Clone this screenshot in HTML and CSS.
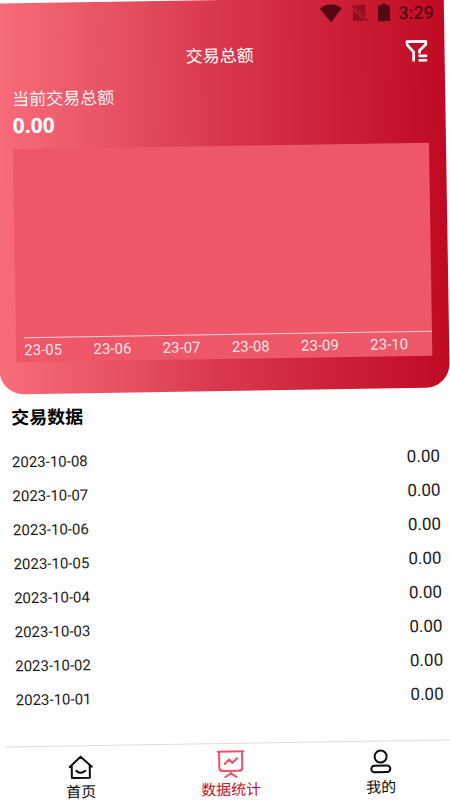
FILE: index.html
```
<!DOCTYPE html>
<html lang="zh-CN">
<head>
<meta charset="utf-8">
<meta name="viewport" content="width=device-width, initial-scale=1">
<title>交易总额</title>
<link rel="stylesheet" href="styles.css">
</head>
<body>
<div class="app">
  <header class="card">
    <div class="status">
      <svg class="status-wifi" viewBox="0 0 22 18"><path d="M0 4.200Q11-4.200 22 4.200L11 18Z"/></svg>
      <svg class="status-sim" viewBox="0 0 18 18"><path d="M6 1H14.500V12.800L3.300 2.500ZM2 5.500 13.800 17H2Z"/><path class="slash" d="M1 1.500 16.500 17"/></svg>
      <svg class="status-battery" viewBox="0 0 12 18"><path d="M3.500 0h5v1.800H12V18H0V1.800h3.500Z"/></svg>
      <span>3:29</span>
    </div>
    <div class="titlebar">
      <h1>交易总额</h1>
      <button class="filter" type="button" aria-label="筛选">
        <svg viewBox="0 0 22 22"><path d="M8 20.500V12L1.500 4.500V1.500H20.500V4.500L14 10.500V12.500M14 16H20.500M14 20.500H20.500"/></svg>
      </button>
    </div>
    <div class="summary">
      <p class="summary-label">当前交易总额</p>
      <p class="summary-amount">0.00</p>
      <div class="chart">
        <div class="plot"></div>
        <ul class="months">
          <li>23-05</li><li>23-06</li><li>23-07</li><li>23-08</li><li>23-09</li><li>23-10</li>
        </ul>
      </div>
    </div>
  </header>
  <main class="records">
    <h2>交易数据</h2>
    <table>
      <tbody>
        <tr><th scope="row">2023-10-08</th><td>0.00</td></tr>
        <tr><th scope="row">2023-10-07</th><td>0.00</td></tr>
        <tr><th scope="row">2023-10-06</th><td>0.00</td></tr>
        <tr><th scope="row">2023-10-05</th><td>0.00</td></tr>
        <tr><th scope="row">2023-10-04</th><td>0.00</td></tr>
        <tr><th scope="row">2023-10-03</th><td>0.00</td></tr>
        <tr><th scope="row">2023-10-02</th><td>0.00</td></tr>
        <tr><th scope="row">2023-10-01</th><td>0.00</td></tr>
      </tbody>
    </table>
  </main>
  <nav class="tabs">
    <a href="#home">
      <svg viewBox="0 0 28 28"><path d="M3 14.500 14 4.500 25 14.500M5 13V25.500H23V13M9.500 18.500Q14 22.500 18.500 18.500"/></svg>
      首页
    </a>
    <a class="active" href="#stats" aria-current="page">
      <svg viewBox="0 0 28 28"><path d="M1 1.500H27M2.500 2V17.500Q2.500 21 6 21H22Q25.500 21 25.500 17.500V2M14 21V24M8.500 27 14 23.500 19.500 27M8 14 12.500 9.500 15.500 13 20.500 8.500"/></svg>
      数据统计
    </a>
    <a href="#me">
      <svg viewBox="0 0 28 28"><circle cx="14" cy="9" r="6"/><rect x="4.500" y="18" width="19" height="6.500" rx="3.250"/></svg>
      我的
    </a>
  </nav>
</div>
</body>
</html>
```

FILE: styles.css
```
* {
  box-sizing: border-box;
}

body {
  margin: 0;
  overflow: hidden;
  background: #fefefe;
  color: #1c1c1c;
  font-family: Roboto, "Noto Sans CJK SC", sans-serif;
}

h1, h2, p, ul {
  margin: 0;
  padding: 0;
}

.app {
  display: flex;
  flex-direction: column;
  min-height: 100vh;
  transform: rotate(-0.9deg);
}

.card {
  padding-bottom: 32px;
  border-radius: 0 0 24px 24px;
  background: linear-gradient(90deg, #f86c7b 0%, #e65062 28%, #d9374b 50%, #c00a22 100%);
  color: #fff;
}

.status {
  display: flex;
  align-items: center;
  justify-content: flex-end;
  gap: 9px;
  height: 30px;
  padding-right: 10px;
  color: #560812;
  font-size: 18px;
  font-weight: 500;
}

.status svg {
  height: 18px;
  fill: currentColor;
}

.status-wifi {
  width: 22px;
}

.status-sim {
  width: 18px;
  opacity: 0.5;
}

.status-battery {
  width: 12px;
}

.slash {
  stroke: currentColor;
  stroke-width: 1.5;
}

.titlebar {
  display: grid;
  grid-template-columns: 1fr auto 1fr;
  align-items: center;
  height: 48px;
  padding: 0 17px;
}

.titlebar h1 {
  grid-column: 2;
  font-size: 17px;
  font-weight: 400;
}

.filter {
  justify-self: end;
  width: 22px;
  height: 22px;
  padding: 0;
  border: 0;
  background: none;
  color: inherit;
}

.filter svg {
  display: block;
  fill: none;
  stroke: currentColor;
  stroke-width: 2.75;
  stroke-linejoin: round;
  stroke-linecap: round;
}

.summary {
  padding: 6px 17px 0;
}

.summary-label {
  font-size: 17px;
  font-weight: 350;
  line-height: 24px;
}

.summary-amount {
  font-family: "Noto Sans", sans-serif;
  font-size: 21px;
  font-weight: 700;
  line-height: 28px;
}

.chart {
  margin-top: 10px;
  padding-left: 8px;
  background: #ed5767;
}

.plot {
  height: 189px;
  border-bottom: 1px solid #fbd3d8;
}

.months {
  display: flex;
  justify-content: space-between;
  padding-right: 24px;
  color: #fde6e9;
  font-size: 15px;
  line-height: 24px;
  list-style: none;
}

.records {
  padding: 11px 11px 0;
}

.records h2 {
  margin-bottom: 14px;
  color: #000;
  font-size: 18px;
  font-weight: 700;
  line-height: 26px;
}

.records table {
  width: 100%;
  border-collapse: collapse;
}

.records th,
.records td {
  height: 34px;
  padding: 0;
}

.records th {
  font-size: 15px;
  font-weight: 400;
  text-align: left;
}

.records td {
  font-size: 17px;
  text-align: right;
}

.tabs {
  display: flex;
  margin-top: auto;
  padding-top: 6px;
  border-top: 1px solid #dedede;
}

.tabs a {
  display: flex;
  flex: 1;
  flex-direction: column;
  align-items: center;
  gap: 2px;
  color: #0c0c0c;
  font-size: 15px;
  line-height: 20px;
  text-decoration: none;
}

.tabs svg {
  width: 28px;
  height: 28px;
  fill: none;
  stroke: currentColor;
  stroke-width: 2;
  stroke-linecap: round;
  stroke-linejoin: round;
}

.tabs .active {
  color: #c0132b;
}

.active svg {
  stroke: #ed5268;
}
```
